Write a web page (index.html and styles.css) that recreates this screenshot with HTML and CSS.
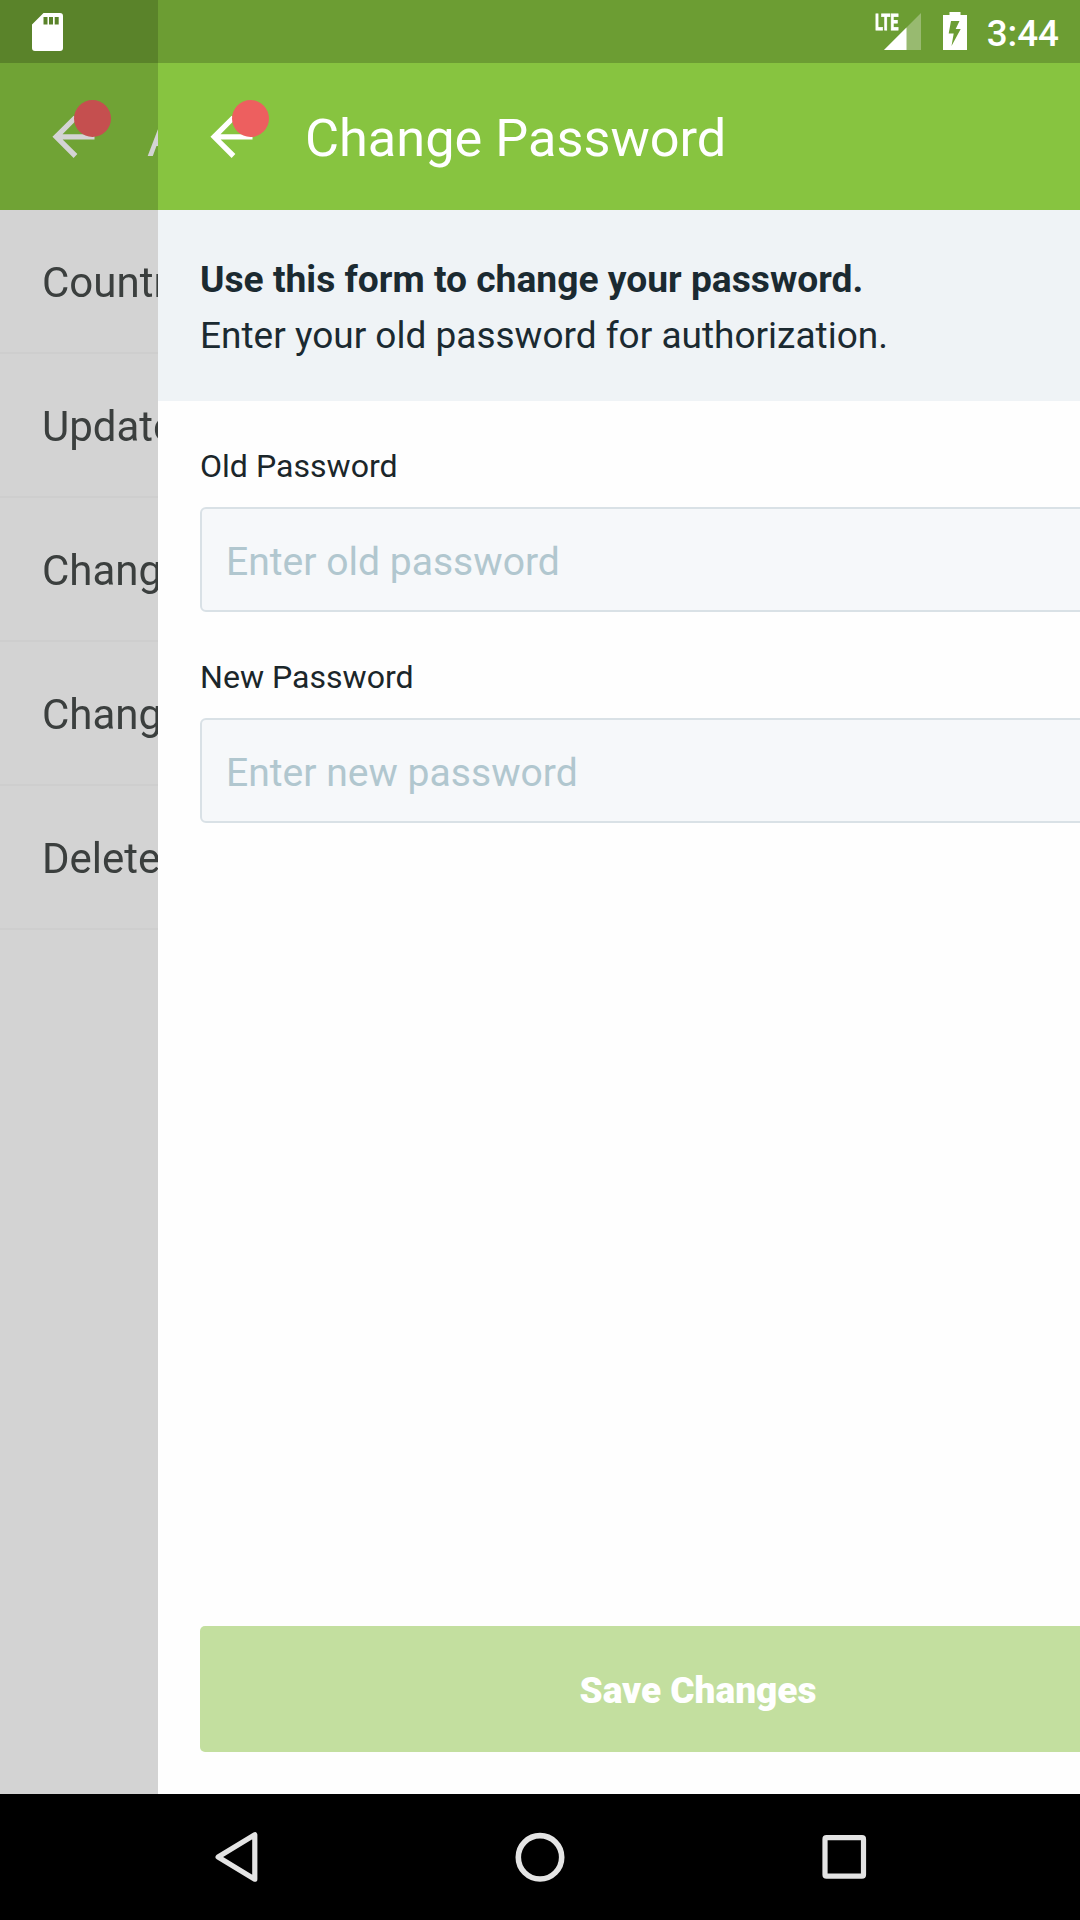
FILE: index.html
```html
<!DOCTYPE html>
<html lang="en">
<head>
<meta charset="utf-8">
<title>Change Password</title>
<link rel="stylesheet" href="styles.css">
</head>
<body>
<div class="device">
  <div class="status-bar">
    <svg class="icon-sd" width="31" height="38" viewBox="0 0 31 38"><path fill="#fff" fill-rule="evenodd" d="M11.500 0H28a3 3 0 0 1 3 3v32a3 3 0 0 1-3 3H3a3 3 0 0 1-3-3V11.500zM11.500 4v7.500h4V4zM17 4v7.500h4V4zM22.700 4v7.500h4V4z"/></svg>
    <div class="status-right">
      <div class="signal">
        <svg width="37" height="37" viewBox="0 0 37 37"><path fill="#fff" fill-opacity=".3" d="M37 0v37H0z"/><path fill="#fff" d="M22.500 14.500V37H0z"/></svg>
        <span class="lte">LTE</span>
      </div>
      <svg class="icon-battery" width="24" height="38" viewBox="0 0 24 38"><path fill="#fff" fill-rule="evenodd" d="M6.500 0h11v3H24v35H0V3h6.500zM8 9 5.700 21.500h5L8.500 34 17.700 17h-5l3.800-8z"/></svg>
      <span class="clock">3:44</span>
    </div>
  </div>
  <main class="stage">
    <section class="screen screen-back">
      <header class="toolbar">
        <div class="back"><svg width="45" height="45" viewBox="0 0 45 45"><path fill="none" stroke="#fff" stroke-width="5.300" d="M23.500 3.500 4.200 22.800 23.500 42M3.500 22.800h39"/></svg><span class="badge"></span></div>
        <h1>Account</h1>
      </header>
      <ul class="menu">
        <li>Country</li>
        <li>Update</li>
        <li>Change</li>
        <li>Change</li>
        <li>Delete</li>
      </ul>
    </section>
    <section class="screen screen-front">
      <header class="toolbar">
        <div class="back"><svg width="45" height="45" viewBox="0 0 45 45"><path fill="none" stroke="#fff" stroke-width="5.300" d="M23.500 3.500 4.200 22.800 23.500 42M3.500 22.800h39"/></svg><span class="badge"></span></div>
        <h1>Change Password</h1>
      </header>
      <div class="intro">
        <strong>Use this form to change your password.</strong>
        <p>Enter your old password for authorization.</p>
      </div>
      <form class="form">
        <label class="field"><span>Old Password</span><input type="password" placeholder="Enter old password"></label>
        <label class="field"><span>New Password</span><input type="password" placeholder="Enter new password"></label>
        <button class="save" type="button">Save Changes</button>
      </form>
    </section>
  </main>
  <nav class="nav-bar">
    <svg width="50" height="52" viewBox="0 0 50 52"><path fill="none" stroke="#e4e4e4" stroke-width="5.200" stroke-linejoin="round" d="M43.800 3.800v44.400L7.100 26z"/></svg>
    <svg width="50" height="52" viewBox="0 0 50 52"><circle cx="25" cy="26.300" r="21.700" fill="none" stroke="#e4e4e4" stroke-width="5.600"/></svg>
    <svg width="50" height="52" viewBox="0 0 50 52"><rect x="6" y="6.700" width="38.500" height="38.500" rx="1.500" fill="none" stroke="#e4e4e4" stroke-width="5.200"/></svg>
  </nav>
</div>
</body>
</html>
```
FILE: styles.css
```css
* { box-sizing: border-box; }
body, h1, p, ul { margin: 0; padding: 0; }
body {
  width: 1080px;
  height: 1920px;
  overflow: hidden;
  font-family: Roboto, "Noto Sans", sans-serif;
}
.device {
  display: grid;
  grid-template: 63px 1731px 126px / 1080px;
  overflow: hidden;
}

/* system status bar, translucent over both screens */
.status-bar {
  grid-area: 1 / 1;
  z-index: 2;
  display: flex;
  justify-content: space-between;
  align-items: flex-start;
  padding: 12.5px 21px 0 32.3px;
  background: rgba(0, 0, 0, .195);
  color: #fff;
}
.status-right { display: flex; align-items: flex-start; }
.signal { position: relative; width: 37px; height: 37px; margin-right: 22px; }
.lte {
  position: absolute;
  left: -9px;
  top: -1px;
  font-size: 22px;
  line-height: 22px;
  font-weight: 700;
  -webkit-text-stroke: .8px #fff;
  transform: scaleX(.66);
  transform-origin: 0 0;
}
.icon-battery { margin: -.5px 20px 0 0; }
.clock { font-size: 36.75px; line-height: 42px; font-weight: 500; }

.stage {
  grid-area: 1 / 1 / 3 / 2;
  display: flex;
  overflow: hidden;
}
.screen { flex: none; overflow: hidden; background: #fefefe; }
.screen-back { width: 158px; filter: brightness(.83); }
.screen-front { width: 1080px; display: flex; flex-direction: column; }

.toolbar {
  display: flex;
  height: 210px;
  padding: 63px 0 0 52px;
  background: #87c440;
  color: #fff;
}
.back { position: relative; flex: none; width: 45px; height: 45px; margin: 51px 50px 0 0; }
.back svg { display: block; }
.badge {
  position: absolute;
  left: 22px;
  top: -14px;
  width: 37px;
  height: 37px;
  border-radius: 50%;
  background: #ed5f5f;
}
.toolbar h1 {
  padding-top: 2px;
  font-size: 52.3px;
  font-weight: 400;
  line-height: 147px;
  white-space: nowrap;
}

.menu { list-style: none; }
.menu li {
  height: 144px;
  padding-left: 42px;
  border-bottom: 2px solid #f8f8f8;
  color: #474c4b;
  font-size: 42px;
  line-height: 145px;
  white-space: nowrap;
}

.intro {
  height: 190.5px;
  padding: 41px 42px 0;
  background: #eff3f6;
  color: #1b2a31;
  font-size: 37px;
  line-height: 56px;
}
.intro strong { display: block; margin-bottom: 1px; font-size: 37.2px; font-weight: 700; }

.form { flex: 1; display: flex; flex-direction: column; padding: 41.5px 42px 42px; }
.field { display: flex; flex-direction: column; margin-bottom: 41px; color: #1b262a; }
.field span { height: 65px; font-size: 32.1px; line-height: 49px; }
.field input {
  height: 105px;
  padding: 5px 24px 0;
  border: 2px solid #d9e1e6;
  border-radius: 6px;
  background: #f6f8fa;
  font: 39.1px Roboto, "Noto Sans", sans-serif;
}
.field input::placeholder { color: #b1c7cf; opacity: 1; }
.save {
  height: 126px;
  margin-top: auto;
  padding: 2px 0 0;
  border: 0;
  border-radius: 5px;
  background: #c3df9f;
  color: #fff;
  font: 900 37px Roboto, "Noto Sans", sans-serif;
}

.nav-bar {
  grid-area: 3 / 1;
  display: flex;
  justify-content: center;
  align-items: center;
  gap: 254px;
  background: #000;
}
```
